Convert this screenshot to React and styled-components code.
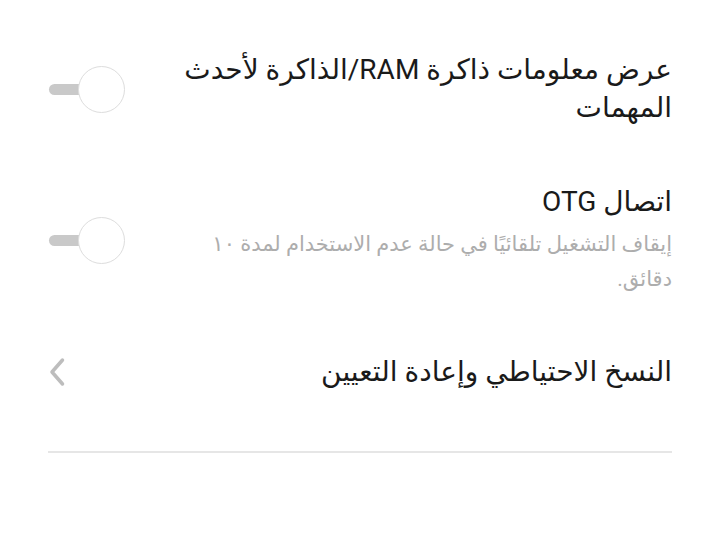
import React from "react";
import styled, { createGlobalStyle } from "styled-components";

const Global = createGlobalStyle`
  body {
    margin: 0;
    background: #ffffff;
    font-family: Roboto, "DejaVu Sans", sans-serif;
  }
`;

const Page = styled.div`
  direction: rtl;
  padding: 23px 48px 0 48px;
  width: 720px;
  box-sizing: border-box;
`;

const Row = styled.div`
  display: flex;
  align-items: center;
  justify-content: space-between;
  gap: 24px;
  padding: 28px 0;
`;

const Texts = styled.div`
  flex: 1;
  min-width: 0;
  padding-left: ${(p) => p.$inset || 0}px;
`;

const Title = styled.div`
  font-size: 28px;
  line-height: 38px;
  color: #1a1a1a;
`;

const Summary = styled.div`
  margin-top: 6px;
  font-size: 21px;
  line-height: 35px;
  color: #adadad;
`;

const Switch = styled.div`
  position: relative;
  width: 77px;
  height: 47px;
  flex-shrink: 0;
  direction: ltr;
`;

const Track = styled.div`
  position: absolute;
  left: 1px;
  top: 18px;
  width: 40px;
  height: 11px;
  border-radius: 6px;
  background: #c9c9c9;
`;

const Thumb = styled.div`
  position: absolute;
  left: 30px;
  top: 0;
  width: 47px;
  height: 47px;
  box-sizing: border-box;
  border-radius: 50%;
  background: #ffffff;
  border: 1.5px solid #dddddd;
`;

const Chevron = styled.svg`
  width: 18px;
  height: 30px;
  flex-shrink: 0;
`;

const Divider = styled.div`
  height: 2px;
  background: #e6e6e6;
  margin-top: 32px;
`;

function Toggle() {
  return (
    <Switch>
      <Track />
      <Thumb />
    </Switch>
  );
}

export default function App() {
  return (
    <>
      <Global />
      <Page>
        <Row>
          <Texts>
            <Title>عرض معلومات ذاكرة RAM/الذاكرة لأحدث المهمات</Title>
          </Texts>
          <Toggle />
        </Row>
        <Row>
          <Texts $inset={40}>
            <Title>اتصال OTG</Title>
            <Summary>
              إيقاف التشغيل تلقائيًا في حالة عدم الاستخدام لمدة ١٠ دقائق.
            </Summary>
          </Texts>
          <Toggle />
        </Row>
        <Row>
          <Texts>
            <Title>النسخ الاحتياطي وإعادة التعيين</Title>
          </Texts>
          <Chevron viewBox="0 0 18 30">
            <path
              d="M14.5 3 L4 15 L14.5 27"
              fill="none"
              stroke="#bdbdbd"
              strokeWidth="3.5"
              strokeLinecap="round"
              strokeLinejoin="round"
            />
          </Chevron>
        </Row>
        <Divider />
      </Page>
    </>
  );
}
